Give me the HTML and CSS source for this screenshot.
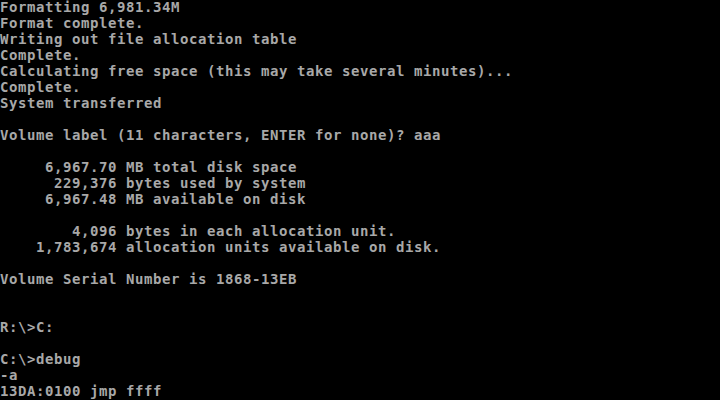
FILE: index.html
```html
<!DOCTYPE html>
<html lang="en">
<head>
    <meta charset="UTF-8">
    <meta name="viewport" content="width=device-width, initial-scale=1.0">
    <title>MS-DOS Format</title>
    <link rel="stylesheet" href="styles.css">
</head>
<body>
    <pre class="screen">Formatting 6,981.34M
Format complete.
Writing out file allocation table
Complete.
Calculating free space (this may take several minutes)...
Complete.
System transferred

Volume label (11 characters, ENTER for none)? aaa

     6,967.70 MB total disk space
      229,376 bytes used by system
     6,967.48 MB available on disk

        4,096 bytes in each allocation unit.
    1,783,674 allocation units available on disk.

Volume Serial Number is 1868-13EB


R:\&gt;C:

C:\&gt;debug
-a
13DA:0100 jmp ffff</pre>
</body>
</html>
```

FILE: styles.css
```css
html, body {
    margin: 0;
    padding: 0;
    background: #000;
}

body {
    width: 720px;
    height: 400px;
    overflow: hidden;
}

.screen {
    margin: -1px 0 0 0;
    padding: 0;
    font-family: "DejaVu Sans Mono", "Liberation Mono", monospace;
    font-size: 14px;
    font-weight: bold;
    letter-spacing: 0.57px;
    line-height: 16px;
    color: #a8a8a8;
    white-space: pre;
}
```
